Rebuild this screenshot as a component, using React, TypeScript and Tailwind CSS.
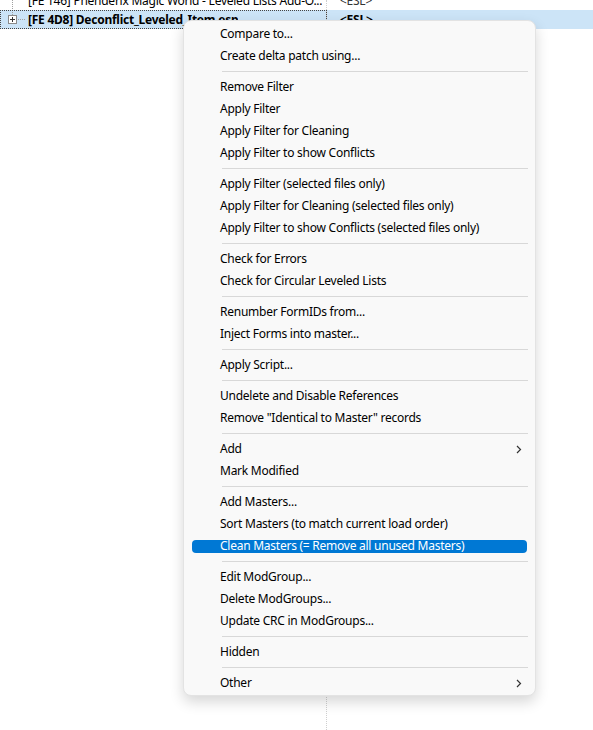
import React from "react";

type Entry = { label: string; sub?: boolean; hl?: boolean } | "sep";

const entries: Entry[] = [
  { label: "Compare to..." },
  { label: "Create delta patch using..." },
  "sep",
  { label: "Remove Filter" },
  { label: "Apply Filter" },
  { label: "Apply Filter for Cleaning" },
  { label: "Apply Filter to show Conflicts" },
  "sep",
  { label: "Apply Filter (selected files only)" },
  { label: "Apply Filter for Cleaning (selected files only)" },
  { label: "Apply Filter to show Conflicts (selected files only)" },
  "sep",
  { label: "Check for Errors" },
  { label: "Check for Circular Leveled Lists" },
  "sep",
  { label: "Renumber FormIDs from..." },
  { label: "Inject Forms into master..." },
  "sep",
  { label: "Apply Script..." },
  "sep",
  { label: "Undelete and Disable References" },
  { label: 'Remove "Identical to Master" records' },
  "sep",
  { label: "Add", sub: true },
  { label: "Mark Modified" },
  "sep",
  { label: "Add Masters..." },
  { label: "Sort Masters (to match current load order)" },
  { label: "Clean Masters (= Remove all unused Masters)", hl: true },
  "sep",
  { label: "Edit ModGroup..." },
  { label: "Delete ModGroups..." },
  { label: "Update CRC in ModGroups..." },
  "sep",
  { label: "Hidden" },
  "sep",
  { label: "Other", sub: true },
];

function Chevron({ color }: { color: string }) {
  return (
    <svg width="6" height="9" viewBox="0 0 6 9" className="shrink-0">
      <path d="M1 1 L4.5 4.5 L1 8" fill="none" stroke={color} strokeWidth="1.2" />
    </svg>
  );
}

export default function App() {
  const font = { fontFamily: '"Noto Sans", "Open Sans", Arial, sans-serif' };
  return (
    <div
      className="relative w-[593px] h-[730px] bg-white overflow-hidden text-[12px] tracking-[-0.25px] text-black"
      style={font}
    >
      {/* column divider */}
      <div className="absolute left-[326px] top-0 h-full border-l border-dotted border-[#cfcfcf]" />

      {/* tree rows */}
      <div className="flex flex-col -mt-[9px]">
        <div className="flex h-[19px] items-center">
          <div className="relative flex w-[326px] items-center h-full">
            <div className="absolute left-[12px] top-[-4px] h-[30px] border-l border-dotted border-[#a0a0a0]" />
            <span className="ml-[28px] truncate">
              [FE 146] Phenderix Magic World - Leveled Lists Add-O...
            </span>
          </div>
          <span className="ml-[14px] text-[#333]">&lt;ESL&gt;</span>
        </div>
        <div className="flex h-[19px] items-center bg-[#cce4f7]">
          <div className="relative flex w-[327px] items-center h-full border border-dotted border-[#444]">
            <div className="absolute left-[7px] top-[4px] w-[9px] h-[9px] border border-[#8a8a8a] bg-white flex items-center justify-center">
              <div className="absolute w-[5px] h-px bg-[#333]" />
              <div className="absolute h-[5px] w-px bg-[#333]" />
            </div>
            <div className="absolute left-[17px] top-[8px] w-[7px] border-t border-dotted border-[#a0a0a0]" />
            <span className="ml-[27px] font-bold truncate">[FE 4D8] Deconflict_Leveled_Item.esp</span>
          </div>
          <span className="ml-[13px] font-bold">&lt;ESL&gt;</span>
        </div>
      </div>

      {/* context menu */}
      <div className="absolute left-[183px] top-[20px] w-[353px] rounded-[8px] border border-[#e3e3e3] bg-[#f9f9f9] pt-[2px] pb-[1px] shadow-[0_6px_14px_rgba(0,0,0,0.16)]">
        {entries.map((e, i) =>
          e === "sep" ? (
            <div key={i} className="h-[9px] flex items-center">
              <div className="ml-[38px] mr-[7px] h-px flex-1 bg-[#d8d8d8]" />
            </div>
          ) : (
            <div key={i} className="h-[22px] flex items-center mx-[8px]">
              <div
                className={
                  e.hl
                    ? "flex h-[13px] flex-1 items-center rounded-[4px] bg-[#0078d4] pl-[28px] pr-[5px] text-white"
                    : "flex h-[13px] flex-1 items-center pl-[28px] pr-[5px]"
                }
              >
                <span className="flex-1 whitespace-nowrap leading-none">{e.label}</span>
                {e.sub && <Chevron color="#333" />}
              </div>
            </div>
          )
        )}
      </div>
    </div>
  );
}
